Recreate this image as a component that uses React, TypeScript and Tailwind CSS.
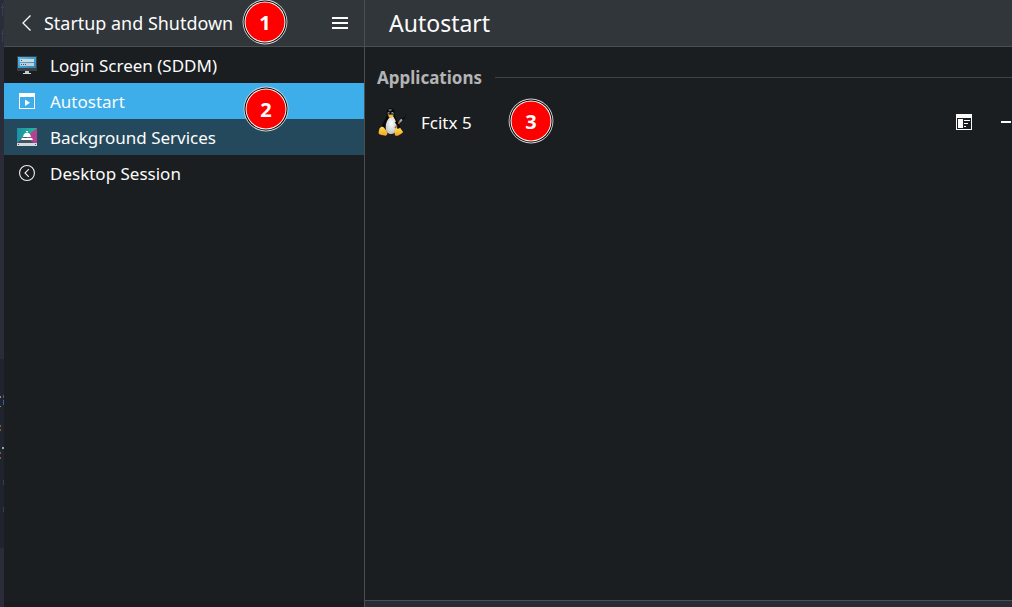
import type { ReactNode } from "react";

function Badge({ n, className }: { n: number; className: string }) {
  return (
    <div className={`absolute h-[46px] w-[46px] ${className}`}>
      <svg className="absolute inset-0" width="46" height="46" viewBox="0 0 46 46">
        <circle cx="23" cy="23" r="22.400" fill="#d8d8d8" />
        <circle cx="23" cy="23" r="21.500" fill="#000" />
        <circle cx="23" cy="23" r="20.500" fill="#fff" />
        <circle cx="23" cy="23" r="19.500" fill="#fe0000" />
      </svg>
      <span className="relative flex h-full items-center justify-center pt-[2px] text-[20px] leading-none font-bold text-white">
        {n}
      </span>
    </div>
  );
}

function MonitorIcon() {
  return (
    <svg width="20" height="20" viewBox="0 0 20 20" shapeRendering="crispEdges">
      <defs>
        <linearGradient id="screen" x1="0" y1="0" x2="1" y2="1">
          <stop offset="0" stopColor="#55bdf0" />
          <stop offset="0.5" stopColor="#3b9fd6" />
          <stop offset="1" stopColor="#2b83b8" />
        </linearGradient>
      </defs>
      <rect y="1" width="20" height="15" fill="#3a3f44" />
      <rect x="1" y="2" width="18" height="11" fill="url(#screen)" />
      <rect x="3" y="4" width="14" height="3" fill="#d0d8dc" />
      <rect x="3" y="8" width="14" height="3" fill="#c3ccd1" />
      <path d="M4 5h1v1h-1zM4 9h1v1h-1zM6 9h1v1h-1zM8 9h1v1h-1z" fill="#4b555c" />
      <path d="M8 16h4v2H8z" fill="#c3c6c8" />
      <path d="M6 18h8v1H6z" fill="#d7dadb" />
    </svg>
  );
}

function AutostartIcon() {
  return (
    <svg width="16" height="16" viewBox="0 0 16 16">
      <path d="M0 0h16v16H0zM1 4v11h14V4z" fill="#fff" fillRule="evenodd" />
      <path d="M6 6.500v6.500l5-3.200z" fill="#fff" />
    </svg>
  );
}

function ServicesIcon() {
  return (
    <svg width="20" height="20" viewBox="0 0 20 20">
      <defs>
        <linearGradient id="teal" x1="0" y1="0" x2="1" y2="0">
          <stop offset="0" stopColor="#218fa5" />
          <stop offset="1" stopColor="#1abc9c" />
        </linearGradient>
      </defs>
      <rect y="1" width="20" height="15" fill="url(#teal)" />
      <path d="M20 1L10 9L16 16h4z" fill="#b44190" />
      <path d="M0 16L8 9L17 16z" fill="#465163" />
      <path d="M9 4h2v1.200H9zM6.300 9.200C6.500 7.200 7.700 5.800 10 5.800s3.500 1.400 3.700 3.400l.6.800H5.700zM5 11h10l1 2H4z" fill="#fff" />
      <rect y="16" width="20" height="3" fill="#d5d9dc" />
      <path d="M1 17h1v1H1zM18 17h1v1h-1z" fill="#555" />
    </svg>
  );
}

function SessionIcon() {
  return (
    <svg width="16" height="16" viewBox="0 0 16 16" fill="none" stroke="#eff0f1" strokeWidth="1.100">
      <circle cx="8" cy="8" r="7.450" />
      <path d="M9.800 4.200L6 8l3.800 3.800" />
    </svg>
  );
}

function Penguin() {
  return (
    <svg width="30" height="30" viewBox="-1 0 30 30" overflow="visible">
      <defs>
        <radialGradient id="belly" cx=".5" cy=".4" r=".65">
          <stop offset="0" stopColor="#fff" />
          <stop offset="1" stopColor="#b9bdc2" />
        </radialGradient>
        <linearGradient id="foot" x1="0" y1="0" x2="0" y2="1">
          <stop offset="0" stopColor="#ffe052" />
          <stop offset="1" stopColor="#f4a31c" />
        </linearGradient>
      </defs>
      <path d="M12.500 1C9 1 8.300 4 8.700 8.200C8.500 11 5 15 3.500 20c-.7 3 2 5 4 5h11c2.600-1 3.800-4 2.400-7.500C19.800 14 17 11.500 16.700 8C17 4 16 1 12.500 1z" fill="#08090a" />
      <path d="M10 3c.8-1.200 3-1.500 4.400-.5L12 4.500z" fill="#62666a" />
      <path d="M12.800 9C9.500 12 7.500 16 7.700 20.500c0 4 2 6.500 5.500 6.500s6-3 6-7.500c0-3.500-2.700-8-4.200-10.500z" fill="url(#belly)" />
      <ellipse cx="10.700" cy="6.500" rx="1.100" ry="1.500" fill="#a9a9a9" />
      <ellipse cx="14.300" cy="6.500" rx="1.300" ry="1.600" fill="#b4b4b4" />
      <circle cx="11" cy="6.800" r=".8" fill="#111" />
      <circle cx="14" cy="6.800" r=".9" fill="#111" />
      <path d="M9.700 8.700l2.800-1.300 3.200 1.200-2.900 2.600z" fill="#f8bf22" />
      <path d="M3 20c2-1 3.300.8 5 3.300 1.800 2.500 2 5.200-.8 5.500C4.800 28 1.800 28 .7 26.500c-.3-1.500.2-2.200.6-4 0-1 .7-1.500 1.700-2.500z" fill="url(#foot)" />
      <path d="M17.500 20.500c1 1.500 3.800 1.500 4.500.3 1 1 1 2 2.500 3.200 1.300 1.600-.8 2.500-2.500 3.500-2 1.500-4.300 2-5.200.2-.5-2 .5-4.500.7-7.200z" fill="url(#foot)" />
      <path d="M17 21L22.800 13.600" stroke="#b06a3c" strokeWidth="1.700" />
      <path d="M22 14.600l2.200-2.800" stroke="#a3abb2" strokeWidth="1.900" />
      <path d="M23 11.200l5.800-4.700-2.300 5.200-2 1.200z" fill="#08090a" />
      <path d="M24.300 11l3-2.800" stroke="#3c4145" strokeWidth=".7" />
      <path d="M17.500 15c1.500 1.600 3 3 3.500 4.700" stroke="#050505" strokeWidth="2" fill="none" />
    </svg>
  );
}

function Row({ icon, label, className = "" }: { icon: ReactNode; label: string; className?: string }) {
  return (
    <div className={`flex h-9 items-center pl-3 ${className}`}>
      <span className="flex w-[22px] shrink-0 items-center justify-center">{icon}</span>
      <span className="ml-3 pt-px text-[17px] leading-9 whitespace-nowrap">{label}</span>
    </div>
  );
}

function EdgeStrip() {
  return (
    <div className="flex h-full w-1 shrink-0 flex-col bg-[#2a2c39]">
      <svg width="4" height="607" viewBox="0 0 4 607" shapeRendering="crispEdges">
        <path d="M0 359h4v189H0z" fill="#20242f" />
        <path d="M3 3h1v1H3zM2 4h1v12H2zM1 7h3v1H1zM3 29h1v1H3zM2 30h1v12H2zM1 33h3v1H1z" fill="#3b3e54" />
        <path d="M0 396h1v2H0zM0 406h1v1H0z" fill="#b98363" />
        <path d="M3 395h1v3H3zM3 400h1v5H3z" fill="#3d5f9f" />
        <path d="M0 425h1v2H0zM0 429h1v2H0zM0 452h1v2H0zM0 457h1v2H0z" fill="#8a5a3a" />
        <path d="M2 447h2v2H2z" fill="#78b5b0" />
        <path d="M3 480h1v5H3zM3 507h1v5H3z" fill="#254358" />
      </svg>
    </div>
  );
}

export default function App() {
  return (
    <div className="relative flex h-[607px] w-[1012px] overflow-hidden bg-[#1b1e20] font-['Noto_Sans',sans-serif] text-[#fcfcfc]">
      <EdgeStrip />
      <aside className="flex w-[361px] shrink-0 flex-col border-r border-[#4b4f52]">
        <header className="flex h-[47px] shrink-0 items-center border-b border-[#4b4f52] bg-[#31363b] pr-4 pl-[17px]">
          <svg width="11" height="18" viewBox="0 0 11 18" fill="none" stroke="#fcfcfc" strokeWidth="1.300">
            <path d="M9.500 1.500L2 9l7.500 7.500" />
          </svg>
          <h1 className="ml-3 flex-1 text-[17.950px] whitespace-nowrap">Startup and Shutdown</h1>
          <svg width="16" height="12" viewBox="0 0 16 12" shapeRendering="crispEdges">
            <path d="M0 0h16v2H0zM0 5h16v2H0zM0 10h16v2H0z" fill="#fcfcfc" />
          </svg>
        </header>
        <nav className="flex-1">
          <Row icon={<MonitorIcon />} label="Login Screen (SDDM)" />
          <Row icon={<AutostartIcon />} label="Autostart" className="bg-[#3daee9]" />
          <Row icon={<ServicesIcon />} label="Background Services" className="bg-[#24495c]" />
          <Row icon={<SessionIcon />} label="Desktop Session" />
        </nav>
        <div className="h-[5px] bg-[#1b1a20]" />
      </aside>
      <main className="flex min-w-0 flex-1 flex-col">
        <header className="flex h-[47px] shrink-0 items-center border-b border-[#4b4f52] bg-[#31363b] pl-6">
          <h2 className="text-[23px]">Autostart</h2>
        </header>
        <section className="flex-1 pt-[18px] pl-3">
          <div className="flex h-6 items-center">
            <h3 className="w-[106px] pt-[2px] text-[17px] leading-6 font-bold text-[#b3b4b5]">Applications</h3>
            <div className="ml-3 h-px flex-1 bg-[#3e4245]" />
          </div>
          <div className="mt-[14px] flex h-[38px] items-center">
            <Penguin />
            <span className="ml-[14px] flex-1 pt-[2px] text-[17px] leading-6">Fcitx 5</span>
            <svg width="16" height="16" viewBox="0 0 16 16" shapeRendering="crispEdges">
              <path d="M0 0h16v16H0zM1 4v11h14V4z" fill="#fcfcfc" fillRule="evenodd" />
              <path d="M2 5h5v9H2zM8 6h6v1H8zM8 9h4v1H8zM8 12h2v1H8z" fill="#fcfcfc" />
            </svg>
            <div className="ml-[29px] h-[2px] w-[10px] bg-[#fcfcfc]" />
            <div className="w-px" />
          </div>
        </section>
        <footer className="h-[7px] border-t border-[#4b4f52] bg-[#292b35]" />
      </main>
      <Badge n={1} className="-top-px left-[242px]" />
      <Badge n={2} className="top-[86px] left-[243px]" />
      <Badge n={3} className="top-[98px] left-[508px]" />
    </div>
  );
}
